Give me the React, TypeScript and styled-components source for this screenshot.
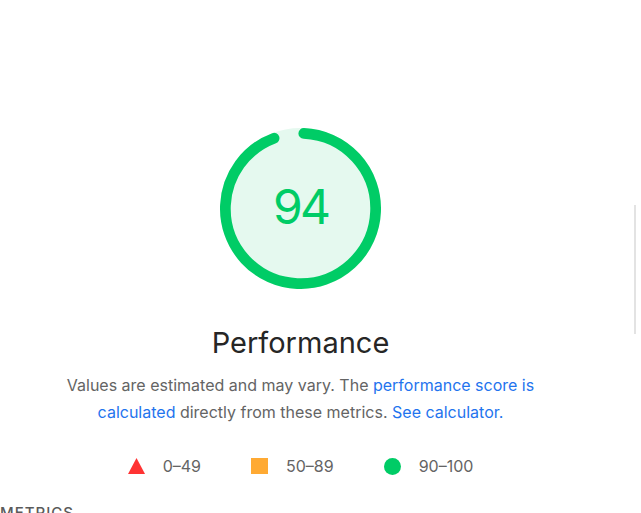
import React from 'react';
import styled, { createGlobalStyle } from 'styled-components';

const GlobalStyle = createGlobalStyle`
  html, body {
    margin: 0;
    padding: 0;
    background: #ffffff;
  }
  body {
    font-family: Inter, "Noto Sans", "Liberation Sans", sans-serif;
    -webkit-font-smoothing: antialiased;
  }
`;

const Page = styled.div`
  display: flex;
  width: 641px;
  height: 513px;
  overflow: hidden;
`;

const Main = styled.main`
  width: 601px;
  display: flex;
  flex-direction: column;
  align-items: center;
  padding-top: 128px;
`;

const Aside = styled.aside`
  flex: 1;
`;

const Divider = styled.div`
  width: 2px;
  height: 129px;
  margin: 205px 0 0 33px;
  background: #e3e3e3;
`;

const GaugeWrap = styled.div`
  width: 161px;
  height: 161px;
  position: relative;
  flex-shrink: 0;
`;

const GaugeSvg = styled.svg`
  width: 161px;
  height: 161px;
  display: block;
`;

const GaugeValue = styled.div`
  position: absolute;
  inset: 0 0 5px 0;
  display: flex;
  align-items: center;
  justify-content: center;
  font-size: 48px;
  font-weight: 400;
  color: #00cc66;
  letter-spacing: -3px;
`;

const Title = styled.h2`
  margin: 36px 0 0;
  font-size: 29px;
  line-height: 35px;
  font-weight: 400;
  color: #262626;
`;

const Description = styled.p`
  margin: 12px 0 0;
  max-width: 490px;
  font-size: 16px;
  line-height: 27px;
  text-align: center;
  color: #646464;
`;

const Link = styled.a`
  color: #1f74ee;
  text-decoration: none;
`;

const Legend = styled.div`
  display: flex;
  align-items: center;
  gap: 50px;
  margin-top: 30px;
  height: 20px;
`;

const LegendItem = styled.div`
  display: flex;
  align-items: center;
  gap: 18px;
  font-size: 16px;
  color: #646464;
`;

const Square = styled.span`
  width: 17px;
  height: 16px;
  background: #ffaa33;
`;

const Dot = styled.span`
  width: 17px;
  height: 17px;
  border-radius: 50%;
  background: #00cc66;
`;

const SectionHeading = styled.div`
  align-self: flex-start;
  margin-top: 28px;
  font-size: 15px;
  line-height: 17px;
  font-weight: 500;
  letter-spacing: 1px;
  color: #5a5a5a;
  text-transform: uppercase;
`;

const Triangle = () => (
  <svg width="17" height="16" viewBox="0 0 17 16">
    <polygon points="8.5,0 17,16 0,16" fill="#ff3333" />
  </svg>
);

const R = 56;
const C = 2 * Math.PI * R;

const Gauge = ({ score }: { score: number }) => {
  const arc = score * C - 2;
  return (
    <GaugeWrap>
      <GaugeSvg viewBox="0 0 120 120">
        <circle cx="60" cy="60" r={R} fill="#e5f9ef" stroke="#e5f9ef" strokeWidth="8" />
        <circle
          cx="60"
          cy="60"
          r={R}
          fill="none"
          stroke="#00cc66"
          strokeWidth="8"
          strokeLinecap="round"
          strokeDasharray={`${arc} ${C}`}
          transform="rotate(-87.5 60 60)"
        />
      </GaugeSvg>
      <GaugeValue>{Math.round(score * 100)}</GaugeValue>
    </GaugeWrap>
  );
};

export default function App() {
  return (
    <Page>
      <GlobalStyle />
      <Main>
        <Gauge score={0.94} />
        <Title>Performance</Title>
        <Description>
          Values are estimated and may vary. The{' '}
          <Link href="#">performance score is calculated</Link> directly from these metrics.{' '}
          <Link href="#">See calculator.</Link>
        </Description>
        <Legend>
          <LegendItem>
            <Triangle />
            0–49
          </LegendItem>
          <LegendItem>
            <Square />
            50–89
          </LegendItem>
          <LegendItem>
            <Dot />
            90–100
          </LegendItem>
        </Legend>
        <SectionHeading>Metrics</SectionHeading>
      </Main>
      <Aside>
        <Divider />
      </Aside>
    </Page>
  );
}
